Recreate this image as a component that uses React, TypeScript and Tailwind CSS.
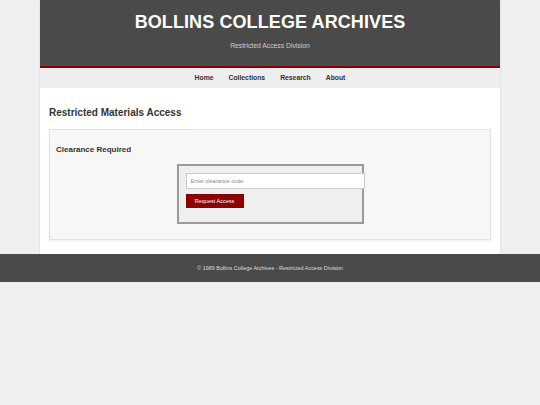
export default function App() {
  const navItems = ["Home", "Collections", "Research", "About"];

  return (
    <div className="min-h-[405px] bg-[#f0f0f0] font-['Liberation_Sans',Arial,sans-serif]">
      <div className="mx-auto w-[460px] bg-white shadow-[0_0_2px_rgba(0,0,0,0.12)]">
        <header className="bg-[#4a4a4a] pt-[11px] pb-[16px] text-center border-b-2 border-[#8b0000]">
          <h1 className="text-[18px] leading-[22px] font-bold text-white tracking-[0.1px]">
            BOLLINS COLLEGE ARCHIVES
          </h1>
          <p className="mt-[8px] text-[6.8px] leading-[9px] text-[#cccccc]">Restricted Access Division</p>
        </header>

        <nav className="flex h-[20px] items-center justify-center gap-[15px] bg-[#eeeeee]">
          {navItems.map((item) => (
            <a key={item} className="text-[6.8px] font-bold text-[#333333]">
              {item}
            </a>
          ))}
        </nav>

        <main className="px-[9px] pt-[19px] pb-[14px]">
          <h2 className="mb-[10px] text-[10px] leading-[12px] font-bold text-[#333333]">
            Restricted Materials Access
          </h2>

          <div className="border border-[#e3e3e3] bg-[#f7f7f7] px-[6px] pt-[15px] pb-[15px] shadow-[0_1px_2px_rgba(0,0,0,0.08)]">
            <h3 className="mb-[9px] text-[8px] leading-[10px] font-bold text-[#333333]">Clearance Required</h3>

            <div className="mx-auto w-[187px] border-2 border-[#9a9a9a] bg-[#efefef] px-[7px] pt-[7px] pb-[14px]">
              <input
                type="text"
                placeholder="Enter clearance code"
                className="relative block h-[16px] w-[179px] border border-[#cccccc] bg-white px-[4px] text-[5.6px] placeholder:text-[#888888] outline-none"
              />
              <button className="mt-[5px] block h-[14px] w-[58px] bg-[#8b0000] text-[5.5px] text-white">
                Request Access
              </button>
            </div>
          </div>
        </main>
      </div>

      <footer className="flex h-[28px] items-center justify-center bg-[#4a4a4a]">
        <p className="text-[5.45px] text-[#dddddd]">© 1989 Bollins College Archives - Restricted Access Division</p>
      </footer>
    </div>
  );
}
